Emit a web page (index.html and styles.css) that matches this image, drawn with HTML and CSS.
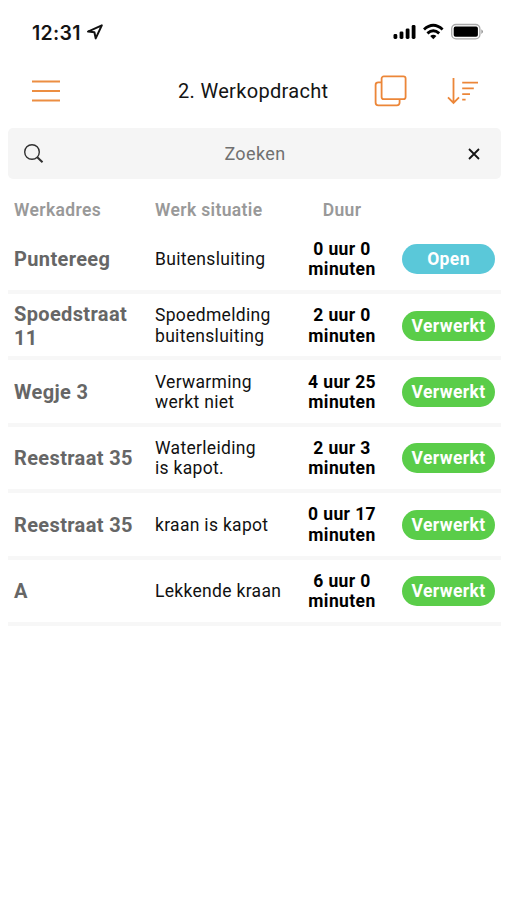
FILE: index.html
```html
<!DOCTYPE html>
<html lang="nl">
<head>
<meta charset="utf-8">
<title>Werkopdracht</title>
<link rel="stylesheet" href="styles.css">
</head>
<body>
<div class="status">
  <span class="time">12:31</span>
  <svg class="location" width="18" height="18" viewBox="0 0 18 18"><path d="M2 8.6 15.8 2.4 9.7 15.4 8.4 9.2Z" fill="none" stroke="#111" stroke-width="2" stroke-linejoin="round"/></svg>
  <svg class="signals" width="94" height="20" viewBox="0 0 94 20">
    <g fill="#000"><rect x="1.5" y="12" width="3.8" height="5" rx="1.4"/><rect x="7.6" y="9.4" width="3.8" height="7.6" rx="1.4"/><rect x="13.7" y="6.4" width="3.8" height="10.6" rx="1.4"/><rect x="19.7" y="3" width="3.8" height="14" rx="1.4"/></g>
    <g fill="none" stroke="#000" stroke-width="2.9"><path d="M32 7.5q9.3-8.4 18.6 0"/><path d="M35.4 11.3q5.9-5.2 11.8 0"/></g>
    <path d="M38.2 14q3.1-2.4 6.2 0L41.3 17.2Z" fill="#000"/>
    <rect x="59.7" y="2.5" width="28.2" height="14.4" rx="4.3" fill="#fff" stroke="#aaa" stroke-width="1.3"/>
    <rect x="61.7" y="4.6" width="24.2" height="10.2" rx="1.8" fill="#000"/>
    <path d="M89.5 7.3q2.6 2.4 0 4.8Z" fill="#777"/>
  </svg>
</div>
<header class="bar">
  <svg class="menu" width="28" height="24" viewBox="0 0 28 24"><path d="M0 2.5h28M0 12h28M0 21.5h28" stroke="#ec8e42" stroke-width="2"/></svg>
  <h1>2. Werkopdracht</h1>
  <svg class="copy" width="34" height="32" viewBox="0 0 34 32" fill="none" stroke="#ec8638" stroke-width="1.8"><rect x="7.6" y="1.4" width="24" height="22.8" rx="2.2"/><path d="M7.6 7.4H4.3Q1.6 7.4 1.6 9.9V27.5Q1.6 30.4 4.3 30.4H22.8Q25.6 30.4 25.6 27.6V24.2"/></svg>
  <svg class="sort" width="32" height="28" viewBox="0 0 32 28" fill="none" stroke="#ec8638" stroke-width="1.8"><path d="M6.5 1v25M1 20.4 6.5 26 12 20.4"/><path d="M15.2 5.7H31M15.2 11.4H26.8M15.2 17.2H23M15.2 22.6H18.6"/></svg>
</header>
<div class="search">
  <svg width="20" height="20" viewBox="0 0 20 20" fill="none" stroke="#303030"><circle cx="8" cy="8" r="7.3" stroke-width="1.4"/><path d="M13.3 13.3 18.5 18.3" stroke-width="2"/></svg>
  <span>Zoeken</span>
  <svg width="12" height="12" viewBox="0 0 12 12" stroke="#151515" stroke-width="1.8"><path d="M1 1 11 11M11 1 1 11"/></svg>
</div>
<main class="list">
  <div class="row head"><span>Werkadres</span><span>Werk situatie</span><span class="duration">Duur</span></div>
  <div class="row"><b class="address">Puntereeg</b><span>Buitensluiting</span><b class="duration">0 uur 0<br>minuten</b><b class="pill open">Open</b></div>
  <div class="row"><b class="address">Spoedstraat<br>11</b><span>Spoedmelding<br>buitensluiting</span><b class="duration">2 uur 0<br>minuten</b><b class="pill">Verwerkt</b></div>
  <div class="row"><b class="address">Wegje 3</b><span>Verwarming<br>werkt niet</span><b class="duration">4 uur 25<br>minuten</b><b class="pill">Verwerkt</b></div>
  <div class="row"><b class="address">Reestraat 35</b><span>Waterleiding<br>is kapot.</span><b class="duration">2 uur 3<br>minuten</b><b class="pill">Verwerkt</b></div>
  <div class="row"><b class="address">Reestraat 35</b><span>kraan is kapot</span><b class="duration">0 uur 17<br>minuten</b><b class="pill">Verwerkt</b></div>
  <div class="row"><b class="address">A</b><span>Lekkende kraan</span><b class="duration">6 uur 0<br>minuten</b><b class="pill">Verwerkt</b></div>
</main>
</body>
</html>
```
FILE: styles.css
```css
* { box-sizing: border-box; }
body {
  margin: 0;
  height: 900px;
  background: #fff;
  color: #141414;
  font-family: Roboto, "Liberation Sans", sans-serif;
  overflow: hidden;
}
svg { display: block; flex: none; }
.status {
  height: 64px;
  padding: 0 21px 0 32px;
  display: flex;
  align-items: center;
}
.time {
  width: 50px;
  padding-top: 1px;
  font: 600 19.5px/24px Inter, sans-serif;
  letter-spacing: 0.3px;
  white-space: nowrap;
}
.location { margin-left: 4px; }
.signals { margin-left: auto; }
.bar {
  height: 54px;
  padding: 0 28px 0 32px;
  display: grid;
  grid-template-columns: 146px 196px 73px 32px;
  align-items: center;
}
.bar h1 {
  margin: 0;
  font-weight: 400;
  font-size: 20px;
  line-height: 24px;
  letter-spacing: 0.32px;
  white-space: nowrap;
}
.search {
  height: 51px;
  margin: 10px 6px 0 8px;
  padding: 0 21px 0 16px;
  border-radius: 5px;
  background: #f5f5f5;
  display: flex;
  align-items: center;
  justify-content: space-between;
  color: #707070;
  font-size: 18px;
  letter-spacing: 0.4px;
}
.search span { margin-right: 2px; }
.list { margin: 0 6px 0 8px; }
.row {
  height: 66.4px;
  padding: 1px 6px 0;
  border-bottom: 4px solid #f7f7f7;
  display: grid;
  grid-template-columns: 141px 140px 94px 1fr;
  align-items: center;
  color: #111;
  font-size: 17.5px;
  line-height: 20.5px;
  letter-spacing: 0.31px;
  white-space: nowrap;
}
.row.head {
  height: 48.6px;
  padding-top: 13px;
  border: 0;
  color: #999;
  font-weight: 600;
  letter-spacing: 0.36px;
}
.duration { text-align: center; }
b.duration { color: #000; font-weight: 700; letter-spacing: 0.4px; }
.address {
  color: #666;
  font-size: 20px;
  line-height: 24px;
  font-weight: 700;
  letter-spacing: 0.36px;
}
.pill {
  justify-self: end;
  width: 93px;
  height: 30px;
  border-radius: 15px;
  background: #5acd49;
  color: #fff;
  font-size: 17.5px;
  line-height: 30px;
  letter-spacing: 0.38px;
  text-align: center;
}
.pill.open { background: #5ac8d9; }
```
